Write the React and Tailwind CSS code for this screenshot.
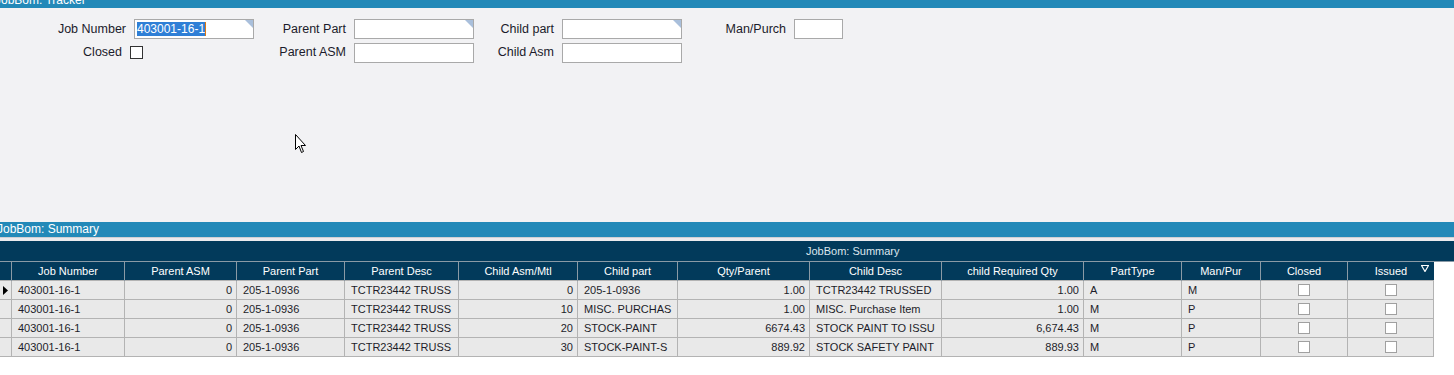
import React from "react";

const cols = [
  { name: "", w: 12 },
  { name: "Job Number", w: 113, key: "job" },
  { name: "Parent ASM", w: 112, key: "pasm", right: true },
  { name: "Parent Part", w: 108, key: "ppart" },
  { name: "Parent Desc", w: 114, key: "pdesc" },
  { name: "Child Asm/Mtl", w: 119, key: "casm", right: true },
  { name: "Child part", w: 100, key: "cpart" },
  { name: "Qty/Parent", w: 132, key: "qty", right: true },
  { name: "Child Desc", w: 132, key: "cdesc" },
  { name: "child Required Qty", w: 142, key: "req", right: true },
  { name: "PartType", w: 98, key: "ptype" },
  { name: "Man/Pur", w: 79, key: "mp" },
  { name: "Closed", w: 87, key: "closed", check: true },
  { name: "Issued", w: 86, key: "issued", check: true },
];

const rows = [
  { job: "403001-16-1", pasm: "0", ppart: "205-1-0936", pdesc: "TCTR23442 TRUSS", casm: "0", cpart: "205-1-0936", qty: "1.00", cdesc: "TCTR23442 TRUSSED", req: "1.00", ptype: "A", mp: "M" },
  { job: "403001-16-1", pasm: "0", ppart: "205-1-0936", pdesc: "TCTR23442 TRUSS", casm: "10", cpart: "MISC. PURCHAS", qty: "1.00", cdesc: "MISC. Purchase Item", req: "1.00", ptype: "M", mp: "P" },
  { job: "403001-16-1", pasm: "0", ppart: "205-1-0936", pdesc: "TCTR23442 TRUSS", casm: "20", cpart: "STOCK-PAINT", qty: "6674.43", cdesc: "STOCK PAINT TO ISSU", req: "6,674.43", ptype: "M", mp: "P" },
  { job: "403001-16-1", pasm: "0", ppart: "205-1-0936", pdesc: "TCTR23442 TRUSS", casm: "30", cpart: "STOCK-PAINT-S", qty: "889.92", cdesc: "STOCK SAFETY PAINT", req: "889.93", ptype: "M", mp: "P" },
];

const gridCols =
  "grid grid-cols-[12px_113px_112px_108px_114px_119px_100px_132px_132px_142px_98px_79px_87px_86px]";

function Field({ w = "w-[120px]", corner, children }) {
  return (
    <div className={`relative h-[20px] ${w} border border-[#a9a9a9] bg-white flex items-center px-[2px]`}>
      {children}
      {corner && (
        <div className="absolute top-0 right-0 w-0 h-0 border-t-[8px] border-l-[8px] border-t-[#a9bfdb] border-l-transparent" />
      )}
    </div>
  );
}

function Label({ children, className = "" }) {
  return (
    <div className={`flex items-center justify-end pr-[8px] text-[12.5px] text-[#1b1b2b] ${className}`}>
      {children}
    </div>
  );
}

export default function App() {
  return (
    <div className="w-[1454px] h-[375px] overflow-hidden bg-white font-['Liberation_Sans',Arial,sans-serif]">
      <div className="h-[8px] bg-[#2389b8] overflow-hidden">
        <div className="-mt-[7px] -ml-[5px] text-[12px] leading-[14px] text-white">JobBom: Tracker</div>
      </div>

      <div className="relative h-[214px] bg-[#f2f2f4] pt-[11px]">
        <div className="grid grid-cols-[134px_120px_100px_120px_88px_120px_112px_49px] grid-rows-[20px_19px] gap-y-[4px]">
          <Label className="pr-[7px]">Job Number</Label>
          <Field corner>
            <span className="bg-[#2f7fd6] text-white text-[12px] leading-[14px]">403001-16-1</span>
            <span className="w-px h-[14px] bg-[#e07a10]" />
          </Field>
          <Label>Parent Part</Label>
          <Field corner />
          <Label>Child part</Label>
          <Field corner />
          <Label>Man/Purch</Label>
          <Field w="w-[49px]" />

          <div className="col-span-2 flex items-center">
            <div className="w-[122px] text-right text-[12.5px] text-[#1b1b2b]">Closed</div>
            <div className="ml-[8px] w-[13px] h-[13px] border border-[#333] bg-white" />
          </div>
          <Label>Parent ASM</Label>
          <Field />
          <Label>Child Asm</Label>
          <Field />
        </div>

        <svg className="absolute left-[295px] top-[126px]" width="12" height="20" viewBox="0 0 12 20">
          <path d="M0.5 0.5 L0.5 15.5 L4 12 L6.5 18.5 L8.5 17.5 L6 11.5 L10.5 11.5 Z" fill="white" stroke="black" strokeWidth="1" />
        </svg>
      </div>

      <div className="h-[15px] bg-[#2389b8] overflow-hidden">
        <div className="-ml-[3px] pt-[1px] text-[12px] leading-[13px] text-white">JobBom: Summary</div>
      </div>
      <div className="h-[4px] bg-[#ebebee] border-t border-[#d0d0d4]" />
      <div className="h-[21px] bg-[#023a5b] flex items-center border-b border-[#8a9aa6]">
        <div className="ml-[806px] text-[11px] text-[#dde6ee]">JobBom: Summary</div>
      </div>

      <div className="w-[1434px] text-[11px]">
        <div className={`${gridCols} h-[19px] bg-[#023a5b]`}>
          {cols.map((c, i) => (
            <div
              key={i}
              className="relative flex items-center justify-center text-white border-r border-[#8a9aa6] last:border-r-0"
            >
              {c.name}
              {c.key === "issued" && (
                <svg className="absolute right-[5px] top-[3px]" width="8" height="7" viewBox="0 0 8 7">
                  <path d="M0.5 0.5 L7.5 0.5 L4 6.5 Z" fill="none" stroke="white" strokeWidth="1.2" />
                </svg>
              )}
            </div>
          ))}
        </div>
        {rows.map((r, ri) => (
          <div key={ri} className={`${gridCols} h-[20px] bg-[#e9e9e9] border-y border-[#b3b3b3] -mt-px first:mt-0 border-r`}>
            {cols.map((c, i) => {
              if (i === 0) {
                return (
                  <div key={i} className="flex items-center justify-center border-r border-[#b3b3b3]">
                    {ri === 0 && (
                      <svg width="5" height="9" viewBox="0 0 5 9">
                        <path d="M0 0 L5 4.5 L0 9 Z" fill="black" />
                      </svg>
                    )}
                  </div>
                );
              }
              if (c.check) {
                return (
                  <div key={i} className="flex items-center justify-center border-r border-[#b3b3b3] last:border-r-0">
                    <div className="w-[12px] h-[12px] bg-white border border-[#a0a0a0]" />
                  </div>
                );
              }
              return (
                <div
                  key={i}
                  className={`flex items-center whitespace-nowrap overflow-hidden text-[#1d1d2a] border-r border-[#b3b3b3] ${
                    c.right ? "justify-end pr-[4px]" : "pl-[6px]"
                  }`}
                >
                  {r[c.key]}
                </div>
              );
            })}
          </div>
        ))}
      </div>
    </div>
  );
}
